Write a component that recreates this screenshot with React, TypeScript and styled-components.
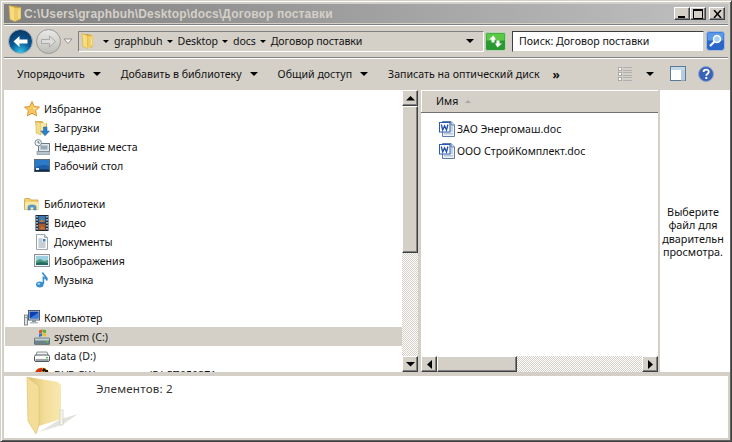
import React from "react";
import styled, { createGlobalStyle } from "styled-components";

const Global = createGlobalStyle`
  html, body { margin: 0; padding: 0; background: #d4d0c8; }
  #root { width: 732px; height: 442px; overflow: hidden; }
  * { box-sizing: border-box; }
`;

const dither = `
  background-color: #d4d0c8;
  background-image: conic-gradient(#ffffff 25%, #d4d0c8 0 50%, #ffffff 0 75%, #d4d0c8 0);
  background-size: 2px 2px;
`;
const bevel = `
  background: #d4d0c8;
  border: 1px solid;
  border-color: #ffffff #404040 #404040 #ffffff;
  box-shadow: inset -1px -1px 0 #808080;
`;

const Window = styled.div`
  width: 732px;
  height: 442px;
  display: flex;
  flex-direction: column;
  background: #d4d0c8;
  border: 1px solid;
  border-color: #d4d0c8 #404040 #404040 #d4d0c8;
  box-shadow: inset 1px 1px 0 #fff, inset -1px -1px 0 #606060;
  padding: 3px;
  font-family: "Noto Sans", Tahoma, sans-serif;
  font-size: 10.6px;
  color: #111;
`;
const TitleBar = styled.div`
  height: 19px;
  flex: none;
  display: flex;
  align-items: center;
  padding: 0 2px 0 3px;
  gap: 1px;
  background: linear-gradient(to right, #808080, #c0c0c0);
`;
const TitleText = styled.div`
  flex: 1;
  font-family: "Liberation Sans", sans-serif;
  font-weight: bold;
  font-size: 12px;
  letter-spacing: 0.16px;
  color: #d4d0c8;
  white-space: nowrap;
`;
const WinButton = styled.div`
  ${bevel}
  width: 16px;
  height: 13px;
  display: flex;
  align-items: center;
  justify-content: center;
`;
const WinButtons = styled.div`
  display: flex;
  align-items: center;
  margin-right: 1px;
`;
const GapButton = styled(WinButton)`
  margin-left: 3px;
`;

const AddressRow = styled.div`
  flex: none;
  height: 34px;
  margin-top: 1px;
  border-top: 1px solid #808080;
  border-bottom: 1px solid #808080;
  box-shadow: inset 0 1px 0 #fff, 0 1px 0 #fff;
  display: flex;
  align-items: center;
  padding: 0 3px 0 4px;
`;
const NavButtons = styled.div`
  width: 70px;
  height: 28px;
  display: flex;
  align-items: center;
  gap: 3px;
  flex: none;
`;
const AddressBox = styled.div`
  width: 406px;
  height: 21px;
  flex: none;
  display: flex;
  align-items: center;
  border: 1px solid;
  border-color: #808080 #fff #fff #808080;
  padding: 0 0 0 1px;
  background: #d4d0c8;
`;
const Crumb = styled.span`
  display: inline-flex;
  align-items: center;
  gap: 5px;
  margin-right: 4px;
  letter-spacing: -0.1px;
  white-space: nowrap;
`;
const Caret = styled.i<{ $w?: number }>`
  display: inline-block;
  width: 0;
  height: 0;
  border-left: ${(p) => p.$w ?? 3}px solid transparent;
  border-right: ${(p) => p.$w ?? 3}px solid transparent;
  border-top: ${(p) => p.$w ?? 3}px solid #000;
`;
const Spacer = styled.div`
  flex: 1;
`;
const SearchBox = styled.div`
  width: 192px;
  height: 21px;
  margin-left: 6px;
  flex: none;
  background: #fff;
  border: 1px solid;
  border-color: #404040 #d4d0c8 #d4d0c8 #404040;
  display: flex;
  align-items: center;
  padding-left: 6px;
  white-space: nowrap;
`;

const Toolbar = styled.div`
  flex: none;
  height: 31px;
  margin-top: 1px;
  display: flex;
  align-items: center;
  padding: 0 14px 1px 13px;
`;
const ToolItem = styled.div`
  display: flex;
  align-items: center;
  white-space: nowrap;
  gap: 8px;
  margin-right: 20px;
`;
const MoreMark = styled.div`
  font-weight: bold;
  font-size: 12px;
  margin-left: -7px;
`;
const ToolIcons = styled.div`
  margin-left: auto;
  display: flex;
  align-items: center;
`;

const Main = styled.div`
  flex: none;
  height: 282px;
  display: flex;
  background: #d4d0c8;
`;
const NavPane = styled.div`
  width: 398px;
  height: 282px;
  flex: none;
  background: #fff;
  overflow: hidden;
  padding-top: 8px;
  border-top: 1px solid #fff;
`;
const TreeHead = styled.div`
  height: 19px;
  display: flex;
  align-items: center;
  padding-left: 20px;
  gap: 4px;
`;
const TreeRow = styled.div<{ $sel?: boolean }>`
  height: 19px;
  margin-left: 1px;
  display: flex;
  align-items: center;
  padding-left: 29px;
  gap: 4px;
  white-space: nowrap;
  background: ${(p) => (p.$sel ? "#d4d0c8" : "transparent")};
`;
const TreeGap = styled.div`
  height: 19px;
`;
const VScroll = styled.div`
  width: 16px;
  height: 282px;
  flex: none;
  display: flex;
  flex-direction: column;
  ${dither}
`;
const ScrollBtn = styled.div`
  ${bevel}
  width: 16px;
  height: 16px;
  flex: none;
  display: flex;
  align-items: center;
  justify-content: center;
`;
const VThumb = styled.div`
  ${bevel}
  width: 16px;
  height: 147px;
  flex: none;
`;
const Gutter = styled.div`
  width: 3px;
  flex: none;
`;
const FilePane = styled.div`
  width: 237px;
  height: 282px;
  flex: none;
  display: flex;
  flex-direction: column;
  background: #fff;
`;
const ColumnHeader = styled.div`
  flex: none;
  height: 23px;
  background: #d4d0c8;
  border-top: 1px solid #fff;
  border-bottom: 1px solid #707070;
  display: flex;
  align-items: center;
  gap: 7px;
  padding: 0 0 1px 15px;
  box-shadow: inset 1px 0 0 #fff;
`;
const SortMark = styled.i`
  width: 0;
  height: 0;
  border-left: 3px solid transparent;
  border-right: 3px solid transparent;
  border-bottom: 3px solid #a8a8a8;
`;
const FileList = styled.div`
  flex: 1;
  padding: 5px 0 0 18px;
`;
const FileRow = styled.div`
  height: 22px;
  display: flex;
  align-items: center;
  gap: 2px;
  white-space: nowrap;
`;
const HScroll = styled.div`
  flex: none;
  height: 16px;
  display: flex;
  ${dither}
`;
const HThumb = styled.div`
  ${bevel}
  width: 80px;
  height: 16px;
  flex: none;
`;
const PreviewPane = styled.div`
  width: 70px;
  height: 282px;
  flex: none;
  margin-left: 2px;
  background: #fff;
  display: flex;
  align-items: center;
  justify-content: center;
  text-align: center;
  line-height: 13.4px;
  font-size: 10.8px;
  padding: 1px 4px 0 0;
  overflow: hidden;
`;
const PreviewText = styled.div`
  white-space: nowrap;
`;
const Details = styled.div`
  flex: none;
  height: 62px;
  margin-top: 4px;
  background: #fff;
  display: flex;
  overflow: hidden;
`;
const DetailIcon = styled.div`
  width: 92px;
  flex: none;
  padding: 0 0 0 22px;
`;
const DetailText = styled.div`
  padding-top: 5px;
  font-size: 11.6px;
  white-space: nowrap;
  color: #333;
  letter-spacing: 0.2px;
`;

const Folder16 = ({ s = 16 }: { s?: number }) => (
  <svg width={s} height={s + 1} viewBox="0 0 16 17" style={{ flex: "none" }}>
    <path d="M3 1h5l5 1.500v13L6 14z" fill="#c9a032" />
    <path d="M2 .5l6 2v14l-5-2z" fill="#f6dc7c" stroke="#cfa848" strokeWidth=".6" />
    <path d="M8 3l6-.5v11l-6 3z" fill="#f0cc60" />
    <path d="M12 5v8" stroke="#fff" strokeWidth=".8" opacity=".7" />
  </svg>
);
const Star = () => (
  <svg width="16" height="16" viewBox="0 0 16 16">
    <path d="M8 .5l2.300 5 5.200.6-3.900 3.500 1.100 5.300L8 12.200l-4.700 2.700 1.100-5.300L.5 6.100l5.200-.6z" fill="#f8c860" stroke="#d88a30" strokeWidth=".9" />
    <path d="M8 3l1.500 3.600 3.400.4-2.600 2.300" fill="#fce8a0" />
  </svg>
);
const Downloads = () => (
  <svg width="16" height="16" viewBox="0 0 16 16">
    <path d="M1 1h7l2 2h3v9H3z" fill="#d8b050" />
    <path d="M2 1.500l5 1.500v12l-5-2z" fill="#f4dc88" stroke="#c8a848" strokeWidth=".5" />
    <path d="M7 3h5v9l-5 3z" fill="#f6e6a8" />
    <path d="M9.500 7h3.500v4h2.500L11 15.800 6.800 11h2.700z" fill="#2c82c8" stroke="#185a98" strokeWidth=".5" />
  </svg>
);
const Recent = () => (
  <svg width="16" height="16" viewBox="0 0 16 16">
    <rect x="4.500" y="4.500" width="11" height="8" fill="#dfe6ea" stroke="#6a7a86" />
    <rect x="6.500" y="6.500" width="7" height="4" fill="#98a8b4" />
    <rect x="3" y="12.500" width="13" height="3" fill="#b8c4cc" stroke="#7a8892" strokeWidth=".6" />
    <circle cx="4.200" cy="3.800" r="3.200" fill="#f2f4f6" stroke="#7a8892" />
    <path d="M4.200 2v2h1.600" stroke="#405060" fill="none" strokeWidth=".8" />
  </svg>
);
const Desktop = () => (
  <svg width="16" height="16" viewBox="0 0 16 16">
    <rect x=".5" y="1.500" width="15" height="12" fill="#1d5ea8" stroke="#5a6a78" />
    <path d="M1 2h14v6C10 6 5 7 1 10z" fill="#2a7ac8" />
    <rect x="1" y="11.500" width="14" height="2" fill="#12284c" />
    <rect x="2" y="10" width="3" height="2" fill="#e8eef2" />
  </svg>
);
const Library = () => (
  <svg width="16" height="16" viewBox="0 0 16 16">
    <path d="M.5 3.500a1 1 0 0 1 1-1h4l1.500 1.500h7v9.500h-13.500z" fill="#f0d070" stroke="#c8a040" strokeWidth=".8" />
    <path d="M1 6h14v7.500H1z" fill="#f8e8a8" />
    <path d="M4 14V10.500c0-2 8-2 8 0V14H9.800v-2.500c0-.6-3.600-.6-3.600 0V14z" fill="#5aa0d8" stroke="#2a70a8" strokeWidth=".5" />
  </svg>
);
const Video = () => (
  <svg width="16" height="16" viewBox="0 0 16 16">
    <rect x="1.500" y="0" width="13" height="16" fill="#1a2a3a" />
    <rect x="4.500" y="1" width="7" height="6.500" fill="#3a78b0" />
    <rect x="4.500" y="8.500" width="7" height="6.500" fill="#a85a30" />
    <path d="M5 7l3-3 3 3zM6 14l2-3 3 3z" fill="#c07840" />
    {[1, 4, 7, 10, 13].map((y) => (
      <g key={y}>
        <rect x="2.300" y={y} width="1.400" height="1.600" fill="#cfe0ee" />
        <rect x="12.300" y={y} width="1.400" height="1.600" fill="#cfe0ee" />
      </g>
    ))}
  </svg>
);
const Documents = () => (
  <svg width="16" height="16" viewBox="0 0 16 16">
    <path d="M2.500.5h8l3 3v12h-11z" fill="#fbfcfd" stroke="#9aa4ac" />
    <path d="M10.500.5v3h3" fill="#d8e0e6" stroke="#9aa4ac" />
    <path d="M4.500 5h4M4.500 7h4M4.500 9h7M4.500 11h7M4.500 13h7" stroke="#7a8a96" strokeWidth=".8" />
    <rect x="9" y="5" width="2.500" height="2.500" fill="#3a80c0" />
  </svg>
);
const Pictures = () => (
  <svg width="16" height="16" viewBox="0 0 16 16">
    <rect x=".5" y="1.500" width="15" height="12" fill="#f2f4f4" stroke="#8a9298" />
    <rect x="2" y="3" width="12" height="9" fill="#9ccfe0" />
    <path d="M2 8l4-2 4 2 4-1v5H2z" fill="#4c9a7a" />
    <path d="M2 10l5-1 7 1v2H2z" fill="#286a68" />
  </svg>
);
const Music = () => (
  <svg width="16" height="16" viewBox="0 0 16 16">
    <path d="M8.500.5c.5 3 5 3.500 4.500 8-.5-2-2.500-3-3.600-3.300V12" fill="none" stroke="#3a8ed0" strokeWidth="1.600" />
    <ellipse cx="5.800" cy="12.500" rx="3.800" ry="3" fill="#3a8ed0" />
    <ellipse cx="4.800" cy="11.800" rx="1.500" ry="1" fill="#a8d8f4" />
  </svg>
);
const Computer = () => (
  <svg width="16" height="16" viewBox="0 0 16 16">
    <rect x=".5" y="5" width="3" height="10" fill="#dce2e6" stroke="#6a7278" strokeWidth=".8" />
    <rect x="1.300" y="7" width="1.400" height="1" fill="#38a038" />
    <rect x="4.500" y=".5" width="11" height="9.500" fill="#e4e8ec" stroke="#4a5a68" />
    <rect x="5.500" y="1.500" width="9" height="7" fill="#0c3eb0" />
    <path d="M5.500 8.500l9-6v6z" fill="#3a7ae0" />
    <rect x="8" y="10" width="4" height="2" fill="#8a949c" />
    <rect x="6" y="12" width="8" height="1.500" fill="#b4bcc2" />
  </svg>
);
const SystemDrive = () => (
  <svg width="16" height="16" viewBox="0 0 16 16">
    <rect x="0" y="9" width="16" height="6.500" rx="1.500" fill="#6a8288" stroke="#4a5a60" strokeWidth=".6" />
    <rect x="1" y="9.500" width="14" height="2" fill="#c4d2d4" />
    <rect x="12" y="12" width="2" height="1.500" fill="#50c850" />
    <path d="M5 1.500l3-1v3l-3 1z" fill="#e05030" />
    <path d="M8.500.5l3.500.5v3l-3.500-.5z" fill="#60b030" />
    <path d="M5 5l3-1v3l-3 1z" fill="#3070d0" />
    <path d="M8.500 4l3.500.5v3L8.500 7z" fill="#f0c020" />
  </svg>
);
const DataDrive = () => (
  <svg width="16" height="16" viewBox="0 0 16 16">
    <path d="M2 7l1-3h10l1 3" fill="#f0f2f2" stroke="#70787c" strokeWidth=".8" />
    <rect x=".5" y="7" width="15" height="6.500" rx="1.500" fill="#fbfbfb" stroke="#50585c" />
    <rect x="1.500" y="11" width="13" height="2" fill="#9aa4a8" />
    <rect x="12" y="9" width="2" height="1.400" fill="#50c050" />
  </svg>
);
const Dvd = () => (
  <svg width="16" height="16" viewBox="0 0 16 16" style={{ flex: "none" }}>
    <circle cx="8" cy="8" r="7.500" fill="#f4c820" />
    <path d="M1 6a7 7 0 0 1 7-5v3l-3 3z" fill="#d82810" />
    <path d="M9 1l3 1-2 3-2-1z" fill="#201000" />
    <path d="M1 5h3v2H1zM11 3h3v3h-3z" fill="#201000" />
  </svg>
);
const DocIcon = () => (
  <svg width="16" height="16" viewBox="0 0 16 16">
    <path d="M3.500.5h8.500l3.500 3.500v11.500h-12z" fill="#eef3fa" stroke="#5f7da8" />
    <path d="M12 .5V4h3.500" fill="#cfdcee" stroke="#5f7da8" />
    <path d="M11.500 6h2.500M11.500 8h2.500M11.500 10h2.500M5 12.800h9" stroke="#8aa0bc" strokeWidth=".8" />
    <rect x=".5" y="1.500" width="10.500" height="9.500" fill="#fff" stroke="#2a5ab0" />
    <path d="M2.300 3.500l1.400 5.500 1.900-4.200 1.900 4.200 1.400-5.500" fill="none" stroke="#1f4ea8" strokeWidth="1.300" />
  </svg>
);
const BackButton = () => (
  <svg width="25" height="25" viewBox="0 0 25 25" style={{ flex: "none" }}>
    <defs>
      <radialGradient id="bk" cx=".5" cy=".95" r=".9">
        <stop offset="0" stopColor="#35c4e8" />
        <stop offset=".5" stopColor="#0a5a98" />
        <stop offset="1" stopColor="#0a3a68" />
      </radialGradient>
    </defs>
    <circle cx="12.500" cy="12.500" r="12" fill="url(#bk)" stroke="#b0b4b8" />
    <path d="M5.500 12.500l6-5.500v3.500h8v4h-8V18z" fill="#fff" />
  </svg>
);
const ForwardButton = () => (
  <svg width="25" height="25" viewBox="0 0 25 25" style={{ flex: "none" }}>
    <defs>
      <linearGradient id="fw" x1="0" y1="0" x2="0" y2="1">
        <stop offset="0" stopColor="#e8e8e6" />
        <stop offset="1" stopColor="#bdbdb8" />
      </linearGradient>
    </defs>
    <circle cx="12.500" cy="12.500" r="12" fill="url(#fw)" stroke="#9a9a98" />
    <path d="M19.500 12.500l-6-5.500v3.500h-8v4h8V18z" fill="#dcdcda" stroke="#a0a0a0" strokeWidth=".8" />
  </svg>
);
const Refresh = () => (
  <svg width="21" height="19" viewBox="0 0 21 19" style={{ flex: "none", marginLeft: 1 }}>
    <rect x=".5" y=".5" width="20" height="18" rx="2" fill="#2a9a30" stroke="#b8d4b8" />
    <rect x="1.500" y="1.500" width="18" height="7" fill="#5cc848" />
    <path d="M8.500 3.500L4 7.500h2.500v3h3v-3h1.500zM12.500 15.500l4.500-4h-2.500v-3h-3v3H10z" fill="#fff" />
  </svg>
);
const SearchButton = () => (
  <svg width="19" height="20" viewBox="0 0 19 20" style={{ flex: "none", marginLeft: 2 }}>
    <rect x=".5" y=".5" width="18" height="19" rx="3" fill="#2a66c8" stroke="#a8bcd8" />
    <rect x="1.500" y="1.500" width="16" height="8" fill="#5a98e8" />
    <circle cx="11" cy="8" r="3.500" fill="#a8d0f0" stroke="#fff" strokeWidth="1.500" />
    <path d="M8.500 10.500L4 15" stroke="#fff" strokeWidth="2.200" />
  </svg>
);
const Views = () => (
  <svg width="16" height="16" viewBox="0 0 16 16" style={{ flex: "none" }}>
    {[1, 6, 11].map((y) => (
      <g key={y}>
        <rect x="1.500" y={y + 0.5} width="3" height="3" fill="#fff" stroke="#707070" strokeWidth="1" strokeDasharray="1 1" />
        <path d={`M6 ${y + 0.5}h9M6 ${y + 3.5}h9`} stroke="#b0b0b0" />
      </g>
    ))}
  </svg>
);
const PreviewToggle = () => (
  <svg width="16" height="16" viewBox="0 0 16 16" style={{ flex: "none", marginLeft: 15 }}>
    <rect x=".5" y=".5" width="15" height="14" fill="#fff" stroke="#5a7a96" />
    <rect x="1" y="1" width="14" height="3" fill="#c4d8e8" />
    <rect x="11" y="4" width="4" height="10.500" fill="#b8ccdc" />
  </svg>
);
const Help = () => (
  <svg width="16" height="16" viewBox="0 0 16 16" style={{ flex: "none", marginLeft: 12 }}>
    <circle cx="8" cy="8" r="7.500" fill="#3a62b8" stroke="#8ea4d0" />
    <path d="M5.500 6c0-3.200 5.300-3.200 5.300-.2 0 2-2.500 2-2.500 4" fill="none" stroke="#fff" strokeWidth="1.800" />
    <rect x="7.300" y="11" width="2" height="2" fill="#fff" />
  </svg>
);
const DetailFolder = () => (
  <svg width="60" height="62" viewBox="0 0 60 62">
    <defs>
      <linearGradient id="panel" x1="0" y1="0" x2="1" y2="0">
        <stop offset="0" stopColor="#dcc070" />
        <stop offset=".5" stopColor="#f3dd98" />
        <stop offset="1" stopColor="#f8e8b0" />
      </linearGradient>
    </defs>
    <path d="M35 43L52 38 36 49 13 56z" fill="#d8d8d4" opacity=".75" />
    <path d="M2 1l30 5 3 3v34l-22 7z" fill="url(#panel)" />
    <path d="M1 1l12 9v39l-3 9-8-13z" fill="#f3dd97" stroke="#dcc278" strokeWidth=".7" />
    <rect x="34" y="34" width="3" height="15" fill="#fbf6e0" stroke="#b0c0c0" strokeWidth=".5" />
  </svg>
);
const Tri = ({ d }: { d: "u" | "d" | "l" | "r" }) => {
  const paths = { u: "M0 5.500L4.500 1 9 5.500z", d: "M0 1h9L4.500 5.500z", l: "M6 0v9L1 4.500z", r: "M1 0v9l5-4.500z" };
  return (
    <svg width={d === "u" || d === "d" ? 9 : 7} height={d === "u" || d === "d" ? 7 : 9}>
      <path d={paths[d]} fill="#000" />
    </svg>
  );
};

const favourites = [
  { n: "Загрузки", i: <Downloads /> },
  { n: "Недавние места", i: <Recent /> },
  { n: "Рабочий стол", i: <Desktop /> },
];
const libraries = [
  { n: "Видео", i: <Video /> },
  { n: "Документы", i: <Documents /> },
  { n: "Изображения", i: <Pictures /> },
  { n: "Музыка", i: <Music /> },
];
const tools = ["Упорядочить", "Добавить в библиотеку", "Общий доступ"];
const files = ["ЗАО Энергомаш.doc", "ООО СтройКомплект.doc"];
const crumbs = ["graphbuh", "Desktop", "docs", "Договор поставки"];

export default function App() {
  return (
    <Window>
      <Global />
      <TitleBar>
        <Folder16 />
        <TitleText>C:\Users\graphbuh\Desktop\docs\Договор поставки</TitleText>
        <WinButtons>
          <WinButton>
            <svg width="8" height="8"><rect x="0" y="6" width="7" height="2" fill="#000" /></svg>
          </WinButton>
          <WinButton>
            <svg width="10" height="10"><path d="M.5 1.500h9v8h-9z" fill="none" stroke="#000" /><rect x="0" y="0" width="10" height="2" fill="#000" /></svg>
          </WinButton>
          <GapButton>
            <svg width="9" height="8"><path d="M1 0l7 8M8 0L1 8" stroke="#000" strokeWidth="1.500" /></svg>
          </GapButton>
        </WinButtons>
      </TitleBar>
      <AddressRow>
        <NavButtons>
          <BackButton />
          <ForwardButton />
          <svg width="10" height="8" style={{ flex: "none", marginLeft: -1 }}>
            <path d="M1 2h8L5 6.500z" fill="#f4f4f2" stroke="#808080" strokeWidth=".8" />
          </svg>
        </NavButtons>
        <AddressBox>
          <Folder16 s={15} />
          <svg width="8" height="4" style={{ flex: "none" }} />
          {crumbs.map((c) => (
            <Crumb key={c}>
              <Caret />
              {c}
            </Crumb>
          ))}
          <Spacer />
          <Caret $w={4} />
          <svg width="9" height="4" style={{ flex: "none" }} />
        </AddressBox>
        <Refresh />
        <SearchBox>Поиск: Договор поставки</SearchBox>
        <SearchButton />
      </AddressRow>
      <Toolbar>
        {tools.map((t) => (
          <ToolItem key={t}>
            {t}
            <Caret $w={4} />
          </ToolItem>
        ))}
        <ToolItem>Записать на оптический диск</ToolItem>
        <MoreMark>»</MoreMark>
        <ToolIcons>
          <Views />
          <svg width="9" height="5" style={{ flex: "none", marginLeft: 13 }}><path d="M0 0h8L4 4z" fill="#000" /></svg>
          <PreviewToggle />
          <Help />
        </ToolIcons>
      </Toolbar>
      <Main>
        <NavPane>
          <TreeHead><Star />Избранное</TreeHead>
          {favourites.map((f) => (
            <TreeRow key={f.n}>{f.i}{f.n}</TreeRow>
          ))}
          <TreeGap />
          <TreeHead><Library />Библиотеки</TreeHead>
          {libraries.map((f) => (
            <TreeRow key={f.n}>{f.i}{f.n}</TreeRow>
          ))}
          <TreeGap />
          <TreeHead><Computer />Компьютер</TreeHead>
          <TreeRow $sel><SystemDrive />system (C:)</TreeRow>
          <TreeRow><DataDrive />data (D:)</TreeRow>
          <TreeRow><Dvd />DVD RW дисковод (E:) ГП050371</TreeRow>
        </NavPane>
        <VScroll>
          <ScrollBtn><Tri d="u" /></ScrollBtn>
          <VThumb />
          <Spacer />
          <ScrollBtn><Tri d="d" /></ScrollBtn>
        </VScroll>
        <Gutter />
        <FilePane>
          <ColumnHeader>Имя<SortMark /></ColumnHeader>
          <FileList>
            {files.map((f) => (
              <FileRow key={f}><DocIcon />{f}</FileRow>
            ))}
          </FileList>
          <HScroll>
            <ScrollBtn><Tri d="l" /></ScrollBtn>
            <HThumb />
            <Spacer />
            <ScrollBtn><Tri d="r" /></ScrollBtn>
          </HScroll>
        </FilePane>
        <PreviewPane>
          <PreviewText>Выберите<br />файл для<br />дварительн<br />просмотра.</PreviewText>
        </PreviewPane>
      </Main>
      <Details>
        <DetailIcon><DetailFolder /></DetailIcon>
        <DetailText>Элементов: 2</DetailText>
      </Details>
    </Window>
  );
}
